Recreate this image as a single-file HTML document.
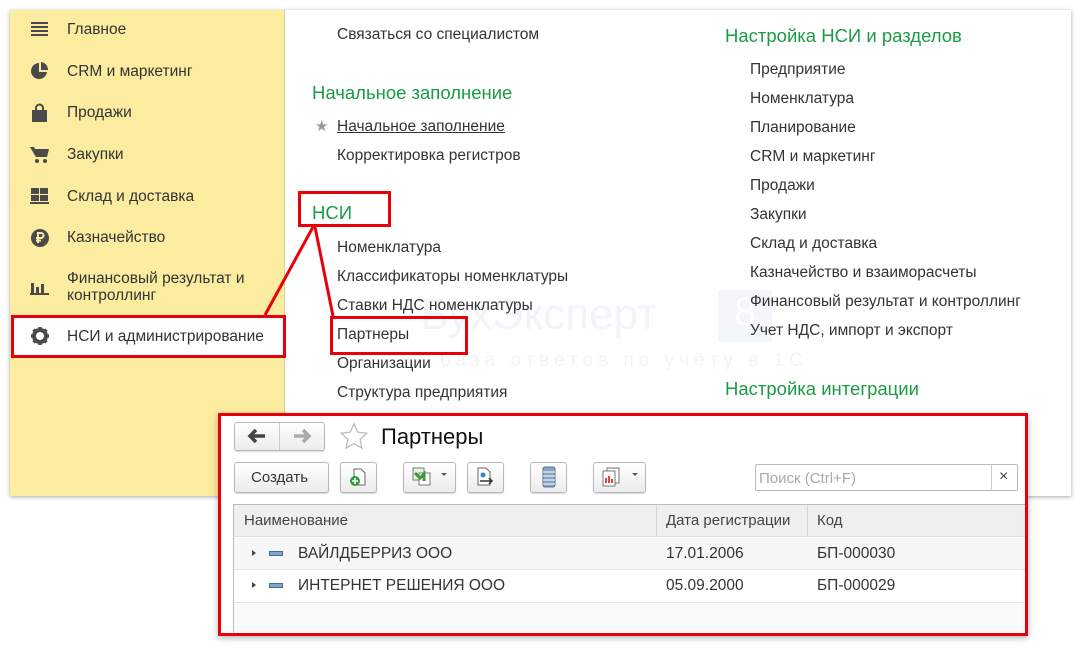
<!DOCTYPE html>
<html><head><meta charset="utf-8"><style>
*{margin:0;padding:0;box-sizing:border-box}
body{width:1081px;height:664px;background:#fff;position:relative;overflow:hidden;font-family:"Liberation Sans",Arial,sans-serif;color:#333}
.a{position:absolute;white-space:nowrap}
.win{position:absolute;left:10px;top:10px;width:1061px;height:486px;background:#fff;box-shadow:0 1px 4px rgba(0,0,0,.35)}
.side{position:absolute;left:10px;top:10px;width:275px;height:486px;background:#fbeca0;border-right:1px solid #d9cf9a}
.si{font-size:15.5px;color:#333}
.g{color:#1a9c44;font-size:18.5px}
.l{font-size:15.5px;color:#333}
.rb{position:absolute;border:3px solid #e8000b}
.btn{position:absolute;background:linear-gradient(#fff,#ececec);border:1px solid #b9b9b9;border-radius:3px;box-shadow:0 1px 1px rgba(0,0,0,.15)}
</style></head><body>
<div class="win"></div>
<div class="side"></div>
<svg class="a" style="left:30px;top:20px" width="20" height="20" viewBox="0 0 20 20" fill="#4a4a4a"><rect x="1" y="2" width="17" height="2"/><rect x="1" y="6" width="17" height="2"/><rect x="1" y="10" width="17" height="2"/><rect x="1" y="14" width="17" height="2"/></svg>
<svg class="a" style="left:30px;top:61px" width="20" height="20" viewBox="0 0 20 20" fill="#4a4a4a"><path d="M9 2A8 8 0 1 0 17 11H9Z"/><path d="M11 1V9H18A8 8 0 0 0 11 1Z"/></svg>
<svg class="a" style="left:30px;top:103px" width="20" height="20" viewBox="0 0 20 20" fill="#4a4a4a"><rect x="2" y="7" width="15" height="12"/><path d="M6 8V5a3.5 3.5 0 0 1 7 0v3" stroke="#4a4a4a" stroke-width="2" fill="none"/></svg>
<svg class="a" style="left:30px;top:144px" width="20" height="20" viewBox="0 0 20 20" fill="#4a4a4a"><path d="M0 3h4l1 2h14l-2 8H6z"/><circle cx="7" cy="17" r="2"/><circle cx="15" cy="17" r="2"/></svg>
<svg class="a" style="left:30px;top:186px" width="20" height="20" viewBox="0 0 20 20" fill="#4a4a4a"><rect x="1" y="2" width="8" height="6"/><rect x="10" y="2" width="8" height="6"/><rect x="1" y="9" width="8" height="6"/><rect x="10" y="9" width="8" height="6"/><rect x="0" y="16" width="19" height="2"/></svg>
<svg class="a" style="left:30px;top:228px" width="20" height="20" viewBox="0 0 20 20"><circle cx="10" cy="10" r="9" fill="#4a4a4a"/><path d="M8 15V5h3a2.5 2.5 0 0 1 0 5H6M6 12.5h5" stroke="#fbeca0" stroke-width="2" fill="none"/></svg>
<svg class="a" style="left:30px;top:277px" width="20" height="20" viewBox="0 0 20 20" fill="#4a4a4a"><rect x="1" y="6" width="3" height="11"/><rect x="6" y="10" width="3" height="7"/><rect x="11" y="7" width="3" height="10"/><rect x="0" y="16" width="19" height="2"/></svg>
<div class="a si" style="left:67px;top:21px">Главное</div>
<div class="a si" style="left:67px;top:63px">CRM и маркетинг</div>
<div class="a si" style="left:67px;top:104px">Продажи</div>
<div class="a si" style="left:67px;top:146px">Закупки</div>
<div class="a si" style="left:67px;top:188px">Склад и доставка</div>
<div class="a si" style="left:67px;top:229px">Казначейство</div>
<div class="a si" style="left:67px;top:270px;line-height:17px">Финансовый результат и<br>контроллинг</div>
<div class="a" style="left:13px;top:317px;width:270px;height:38px;background:#fff"></div>
<svg class="a" style="left:30px;top:326px" width="20" height="20" viewBox="0 0 20 20"><circle cx="10" cy="10" r="6" fill="none" stroke="#4a4a4a" stroke-width="4"/><g stroke="#4a4a4a" stroke-width="3.5"><path d="M10 1v4M10 15v4M1 10h4M15 10h4M3.6 3.6l2.8 2.8M13.6 13.6l2.8 2.8M3.6 16.4l2.8-2.8M13.6 6.4l2.8-2.8"/></g><circle cx="10" cy="10" r="2.5" fill="#fff"/></svg>
<div class="a si" style="left:67px;top:328px">НСИ и администрирование</div>
<div class="a" style="left:420px;top:290px;font-size:44px;color:#f1f5f9">БухЭксперт</div>
<div class="a" style="left:718px;top:290px;width:54px;height:52px;background:#f3f6fa;color:#fff;font-size:40px;text-align:center">8</div>
<div class="a" style="left:440px;top:350px;font-size:19px;letter-spacing:5px;color:#f1f4f7">база ответов по учёту в 1С</div>
<div class="a l" style="left:337px;top:26px">Связаться со специалистом</div>
<div class="a g" style="left:312px;top:82px">Начальное заполнение</div>
<div class="a" style="left:315px;top:117px;color:#999;font-size:15px">★</div>
<div class="a l" style="left:337px;top:118px;text-decoration:underline">Начальное заполнение</div>
<div class="a l" style="left:337px;top:147px">Корректировка регистров</div>
<div class="a g" style="left:312px;top:202px">НСИ</div>
<div class="a l" style="left:337px;top:239px">Номенклатура</div>
<div class="a l" style="left:337px;top:268px">Классификаторы номенклатуры</div>
<div class="a l" style="left:337px;top:297px">Ставки НДС номенклатуры</div>
<div class="a l" style="left:337px;top:326px">Партнеры</div>
<div class="a l" style="left:337px;top:355px">Организации</div>
<div class="a l" style="left:337px;top:384px">Структура предприятия</div>
<div class="a g" style="left:725px;top:25px">Настройка НСИ и разделов</div>
<div class="a l" style="left:750px;top:61px">Предприятие</div>
<div class="a l" style="left:750px;top:90px">Номенклатура</div>
<div class="a l" style="left:750px;top:119px">Планирование</div>
<div class="a l" style="left:750px;top:148px">CRM и маркетинг</div>
<div class="a l" style="left:750px;top:177px">Продажи</div>
<div class="a l" style="left:750px;top:206px">Закупки</div>
<div class="a l" style="left:750px;top:235px">Склад и доставка</div>
<div class="a l" style="left:750px;top:264px">Казначейство и взаиморасчеты</div>
<div class="a l" style="left:750px;top:293px">Финансовый результат и контроллинг</div>
<div class="a l" style="left:750px;top:322px">Учет НДС, импорт и экспорт</div>
<div class="a g" style="left:725px;top:378px">Настройка интеграции</div>
<div class="rb" style="left:11px;top:315px;width:275px;height:43px"></div>
<div class="rb" style="left:298px;top:191px;width:93px;height:36px"></div>
<div class="rb" style="left:330px;top:316px;width:138px;height:39px"></div>
<svg class="a" style="left:0;top:0" width="1081" height="664"><path d="M313 227L265 315M315 227L333 316" stroke="#e8000b" stroke-width="3"/></svg>
<div class="a" style="left:218px;top:413px;width:810px;height:223px;background:#fff;box-shadow:0 2px 6px rgba(0,0,0,.3)"></div>
<div class="btn" style="left:234px;top:422px;width:91px;height:29px"></div>
<div class="a" style="left:279px;top:423px;width:1px;height:27px;background:#ccc"></div>
<svg class="a" style="left:247px;top:427px" width="20" height="18"><path d="M3 9h15M9 3L3 9l6 6" stroke="#444" stroke-width="3.5" fill="none"/></svg>
<svg class="a" style="left:292px;top:427px" width="20" height="18"><path d="M2 9h15M11 3l6 6-6 6" stroke="#aaa" stroke-width="3.5" fill="none"/></svg>
<svg class="a" style="left:339px;top:422px" width="30" height="30" viewBox="0 0 30 30"><path d="M15 2l3.8 8.2 8.9 1-6.6 6.1 1.8 8.8L15 21.6 7.1 26.1l1.8-8.8L2.3 11.2l8.9-1z" fill="none" stroke="#bbb" stroke-width="1.3"/></svg>
<div class="a" style="left:381px;top:424px;font-size:22px;color:#111">Партнеры</div>
<div class="btn" style="left:234px;top:462px;width:95px;height:31px"></div>
<div class="a" style="left:251px;top:469px;font-size:15px;color:#333">Создать</div>
<div class="btn" style="left:340px;top:462px;width:37px;height:31px"></div>
<svg class="a" style="left:348px;top:467px" width="20" height="20"><path d="M6 2h7l4 4v12H6z" fill="#fff" stroke="#666"/><circle cx="7" cy="14" r="5" fill="#2e9a3a"/><path d="M7 11v6M4 14h6" stroke="#fff" stroke-width="1.6"/></svg>
<div class="btn" style="left:403px;top:462px;width:53px;height:31px"></div>
<svg class="a" style="left:411px;top:467px" width="22" height="20"><rect x="2" y="1" width="11" height="12" fill="#e8f0e0" stroke="#777"/><rect x="8" y="6" width="11" height="12" fill="#fff" stroke="#777"/><path d="M4 6l5 5 4-4v7" stroke="#3a9a3a" stroke-width="3" fill="none"/></svg>
<div class="a" style="left:441px;top:473px;border:3px solid transparent;border-top:3px solid #555"></div>
<div class="btn" style="left:467px;top:462px;width:37px;height:31px"></div>
<svg class="a" style="left:474px;top:467px" width="22" height="20"><path d="M4 1h8l4 4v13H4z" fill="#fff" stroke="#666"/><circle cx="9" cy="8" r="2.5" fill="#3b82c4"/><path d="M6 14h12M15 11l3 3-3 3" stroke="#333" stroke-width="1.5" fill="none"/></svg>
<div class="btn" style="left:530px;top:462px;width:37px;height:31px"></div>
<svg class="a" style="left:541px;top:466px" width="16" height="22"><rect x="2" y="1" width="12" height="20" rx="2" fill="#8aa4c4" stroke="#5a7090"/><path d="M2 6h12M2 10h12M2 14h12M2 18h12" stroke="#fff"/></svg>
<div class="btn" style="left:593px;top:462px;width:53px;height:31px"></div>
<svg class="a" style="left:601px;top:467px" width="22" height="20"><rect x="6" y="1" width="12" height="15" fill="#fff" stroke="#777"/><rect x="2" y="4" width="12" height="15" fill="#fff" stroke="#777"/><path d="M5 16v-5M8 16v-7M11 16v-4" stroke-width="2" stroke="#d44"/></svg>
<div class="a" style="left:632px;top:473px;border:3px solid transparent;border-top:3px solid #555"></div>
<div class="a" style="left:755px;top:464px;width:263px;height:27px;border:1px solid #b9b9b9;border-radius:2px;background:#fff"></div>
<div class="a" style="left:991px;top:465px;width:1px;height:25px;background:#ccc"></div>
<div class="a" style="left:759px;top:470px;font-size:15px;color:#aaa">Поиск (Ctrl+F)</div>
<div class="a" style="left:999px;top:468px;font-size:16px;color:#444">×</div>
<div class="a" style="left:233px;top:504px;width:792px;height:130px;border-left:1px solid #bbb;border-top:1px solid #bbb;background:#fff"></div>
<div class="a" style="left:234px;top:505px;width:791px;height:32px;background:#efefef;border-bottom:1px solid #ddd"></div>
<div class="a" style="left:656px;top:505px;width:1px;height:32px;background:#d6d6d6"></div>
<div class="a" style="left:807px;top:505px;width:1px;height:32px;background:#d6d6d6"></div>
<div class="a" style="left:244px;top:512px;font-size:15px;color:#444">Наименование</div>
<div class="a" style="left:666px;top:512px;font-size:15px;color:#444">Дата регистрации</div>
<div class="a" style="left:817px;top:512px;font-size:15px;color:#444">Код</div>
<div class="a" style="left:234px;top:538px;width:791px;height:32px;background:#f7f7f7;border-bottom:1px solid #e4e4e4"></div>
<div class="a" style="left:234px;top:571px;width:791px;height:32px;border-bottom:1px solid #e4e4e4"></div>
<div class="a" style="left:234px;top:604px;width:791px;height:30px;background:#fafafa"></div>
<div class="a" style="left:252px;top:550px;border:3px solid transparent;border-left:4px solid #444"></div>
<div class="a" style="left:252px;top:582px;border:3px solid transparent;border-left:4px solid #444"></div>
<div class="a" style="left:269px;top:551px;width:14px;height:5px;background:#7ea6cc;border:1px solid #4a6e92"></div>
<div class="a" style="left:269px;top:583px;width:14px;height:5px;background:#7ea6cc;border:1px solid #4a6e92"></div>
<div class="a" style="left:298px;top:545px;font-size:15.5px;color:#333">ВАЙЛДБЕРРИЗ ООО</div>
<div class="a" style="left:666px;top:545px;font-size:15.5px;color:#333">17.01.2006</div>
<div class="a" style="left:817px;top:545px;font-size:15.5px;color:#333">БП-000030</div>
<div class="a" style="left:298px;top:577px;font-size:15.5px;color:#333">ИНТЕРНЕТ РЕШЕНИЯ ООО</div>
<div class="a" style="left:666px;top:577px;font-size:15.5px;color:#333">05.09.2000</div>
<div class="a" style="left:817px;top:577px;font-size:15.5px;color:#333">БП-000029</div>
<div class="rb" style="left:218px;top:413px;width:810px;height:223px"></div>
</body></html>
